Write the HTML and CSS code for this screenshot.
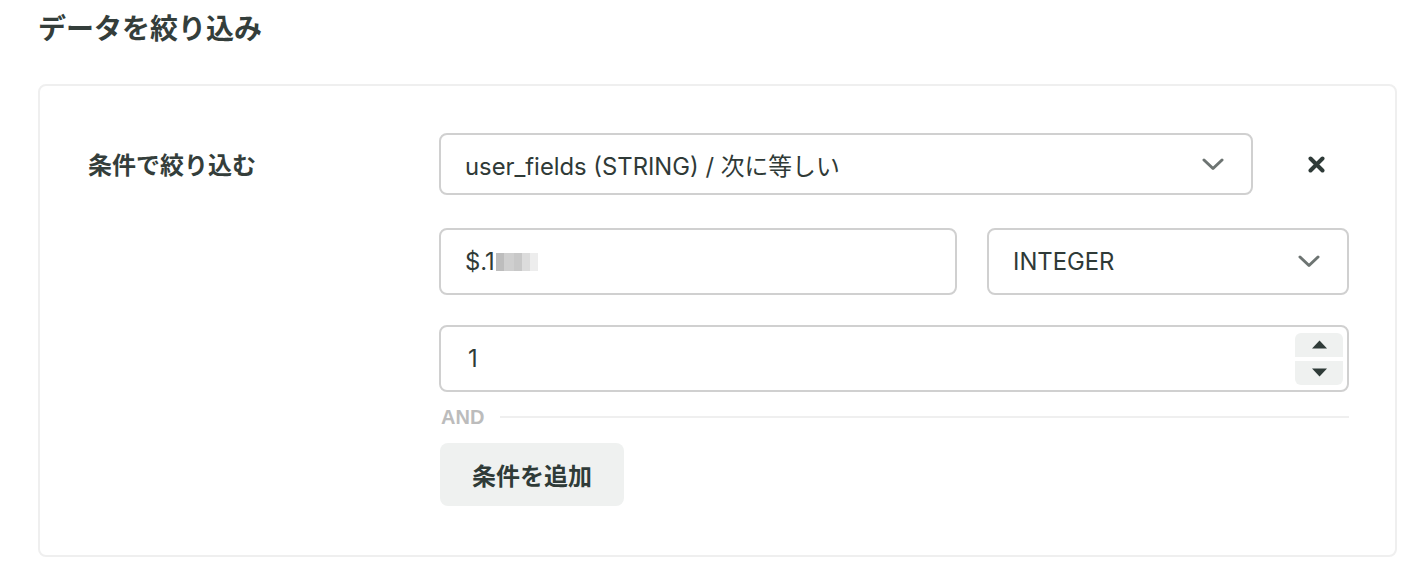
FILE: index.html
```
<!DOCTYPE html>
<html lang="ja">
<head>
<meta charset="utf-8">
<title>データを絞り込み</title>
<link rel="stylesheet" href="styles.css">
</head>
<body>
<div class="page">
  <h2 class="title">データを絞り込み</h2>
  <section class="card">
    <div class="label">条件で絞り込む</div>
    <div class="fields">
      <div class="row row-first">
        <div class="control select">
          <span class="value">user_fields (STRING) / 次に等しい</span>
          <svg class="chev" width="22" height="13" viewBox="0 0 22 13"><path d="M2 2 L11 10.5 L20 2" fill="none" stroke="#6d7472" stroke-width="3" stroke-linecap="round" stroke-linejoin="round"/></svg>
        </div>
        <div class="remove">
          <svg width="17" height="17" viewBox="0 0 17 17"><path d="M2.5 2.5 L14.5 14.5 M14.5 2.5 L2.5 14.5" stroke="#2f3b38" stroke-width="4" stroke-linecap="round"/></svg>
        </div>
      </div>
      <div class="row row-second">
        <div class="control input"><span class="value">$.1</span><span class="mosaic"></span></div>
        <div class="control select">
          <span class="value">INTEGER</span>
          <svg class="chev" width="22" height="13" viewBox="0 0 22 13"><path d="M2 2 L11 10.5 L20 2" fill="none" stroke="#6d7472" stroke-width="3" stroke-linecap="round" stroke-linejoin="round"/></svg>
        </div>
      </div>
      <div class="row">
        <div class="control input number">
          <span class="value num">1</span>
          <div class="spinner">
            <div class="spin"><svg width="17" height="9" viewBox="0 0 17 9"><path d="M1 8.5 L8.5 0.5 L16 8.5 Z" fill="#2f3b38"/></svg></div>
            <div class="spin"><svg width="17" height="9" viewBox="0 0 17 9"><path d="M1 0.5 L8.5 8.5 L16 0.5 Z" fill="#2f3b38"/></svg></div>
          </div>
        </div>
      </div>
      <div class="and-row">
        <span class="and">AND</span>
        <span class="and-line"></span>
      </div>
      <button class="add" type="button">条件を追加</button>
    </div>
  </section>
</div>
</body>
</html>
```

FILE: styles.css
```
* { box-sizing: border-box; }
html, body { margin: 0; padding: 0; background: #fff; }
body {
  font-family: Inter, "Noto Sans CJK JP", sans-serif;
  color: #2f3a37;
}
.page {
  padding: 0 29px 0 38px;
}
.title {
  margin: 7px 0 36px 0;
  font-family: "Noto Sans CJK JP", sans-serif;
  font-weight: 700;
  font-size: 28px;
  line-height: 41px;
  color: #343e3b;
}
.card {
  border: 2px solid #efefef;
  border-radius: 8px;
  padding: 47px 46px 49px 48px;
  display: grid;
  grid-template-columns: 351px 1fr;
}
.label {
  font-family: "Noto Sans CJK JP", sans-serif;
  font-weight: 700;
  font-size: 24px;
  line-height: 62px;
  color: #343e3b;
}
.fields {
  display: flex;
  flex-direction: column;
}
.row {
  display: grid;
  gap: 30px;
}
.row-first {
  grid-template-columns: 1fr 96px;
  gap: 0;
  margin-bottom: 33px;
}
.row-second {
  grid-template-columns: 1fr 362px;
  margin-bottom: 30px;
}
.control {
  border: 2px solid #d0d0d0;
  border-radius: 8px;
  height: 67px;
  display: flex;
  align-items: center;
  padding: 0 27px 0 24px;
  font-size: 23.8px;
  color: #2f3a37;
}
.row-first .control { height: 62px; }
.select { justify-content: space-between; }
.value { white-space: nowrap; }
.mosaic {
  display: inline-block;
  width: 42px;
  height: 18px;
  margin-left: 1px;
  background:
    linear-gradient(90deg, #bdbdbd 0 8px, #cfcfcf 8px 18px, #c8c8c8 18px 26px, #dcdcdc 26px 34px, #ededed 34px 42px);
}
.remove {
  display: flex;
  align-items: center;
  justify-content: center;
  padding-left: 30px;
}
.number {
  justify-content: space-between;
  padding-right: 4px;
}
.num { padding-left: 3px; }
.spinner {
  display: flex;
  flex-direction: column;
  gap: 4px;
  width: 48px;
}
.spin {
  height: 24px;
  background: #eff1f0;
  display: flex;
  align-items: center;
  justify-content: center;
}
.spin:first-child { border-radius: 6px 6px 0 0; }
.spin:last-child { border-radius: 0 0 6px 6px; }
.and-row {
  display: flex;
  align-items: center;
  gap: 16px;
  height: 50px;
  padding-left: 2px;
  margin-bottom: 1px;
}
.and {
  font-family: "Liberation Sans", Arial, sans-serif;
  font-weight: 700;
  font-size: 20px;
  color: #bcbcbc;
}
.and-line {
  flex: 1;
  height: 2px;
  background: #efefef;
}
.add {
  align-self: flex-start;
  margin-left: 1px;
  width: 184px;
  height: 63px;
  border: none;
  border-radius: 8px;
  background: #eff1f0;
  font-family: "Noto Sans CJK JP", sans-serif;
  font-weight: 700;
  font-size: 24px;
  color: #2f3b38;
  cursor: pointer;
  padding: 0;
}
```
